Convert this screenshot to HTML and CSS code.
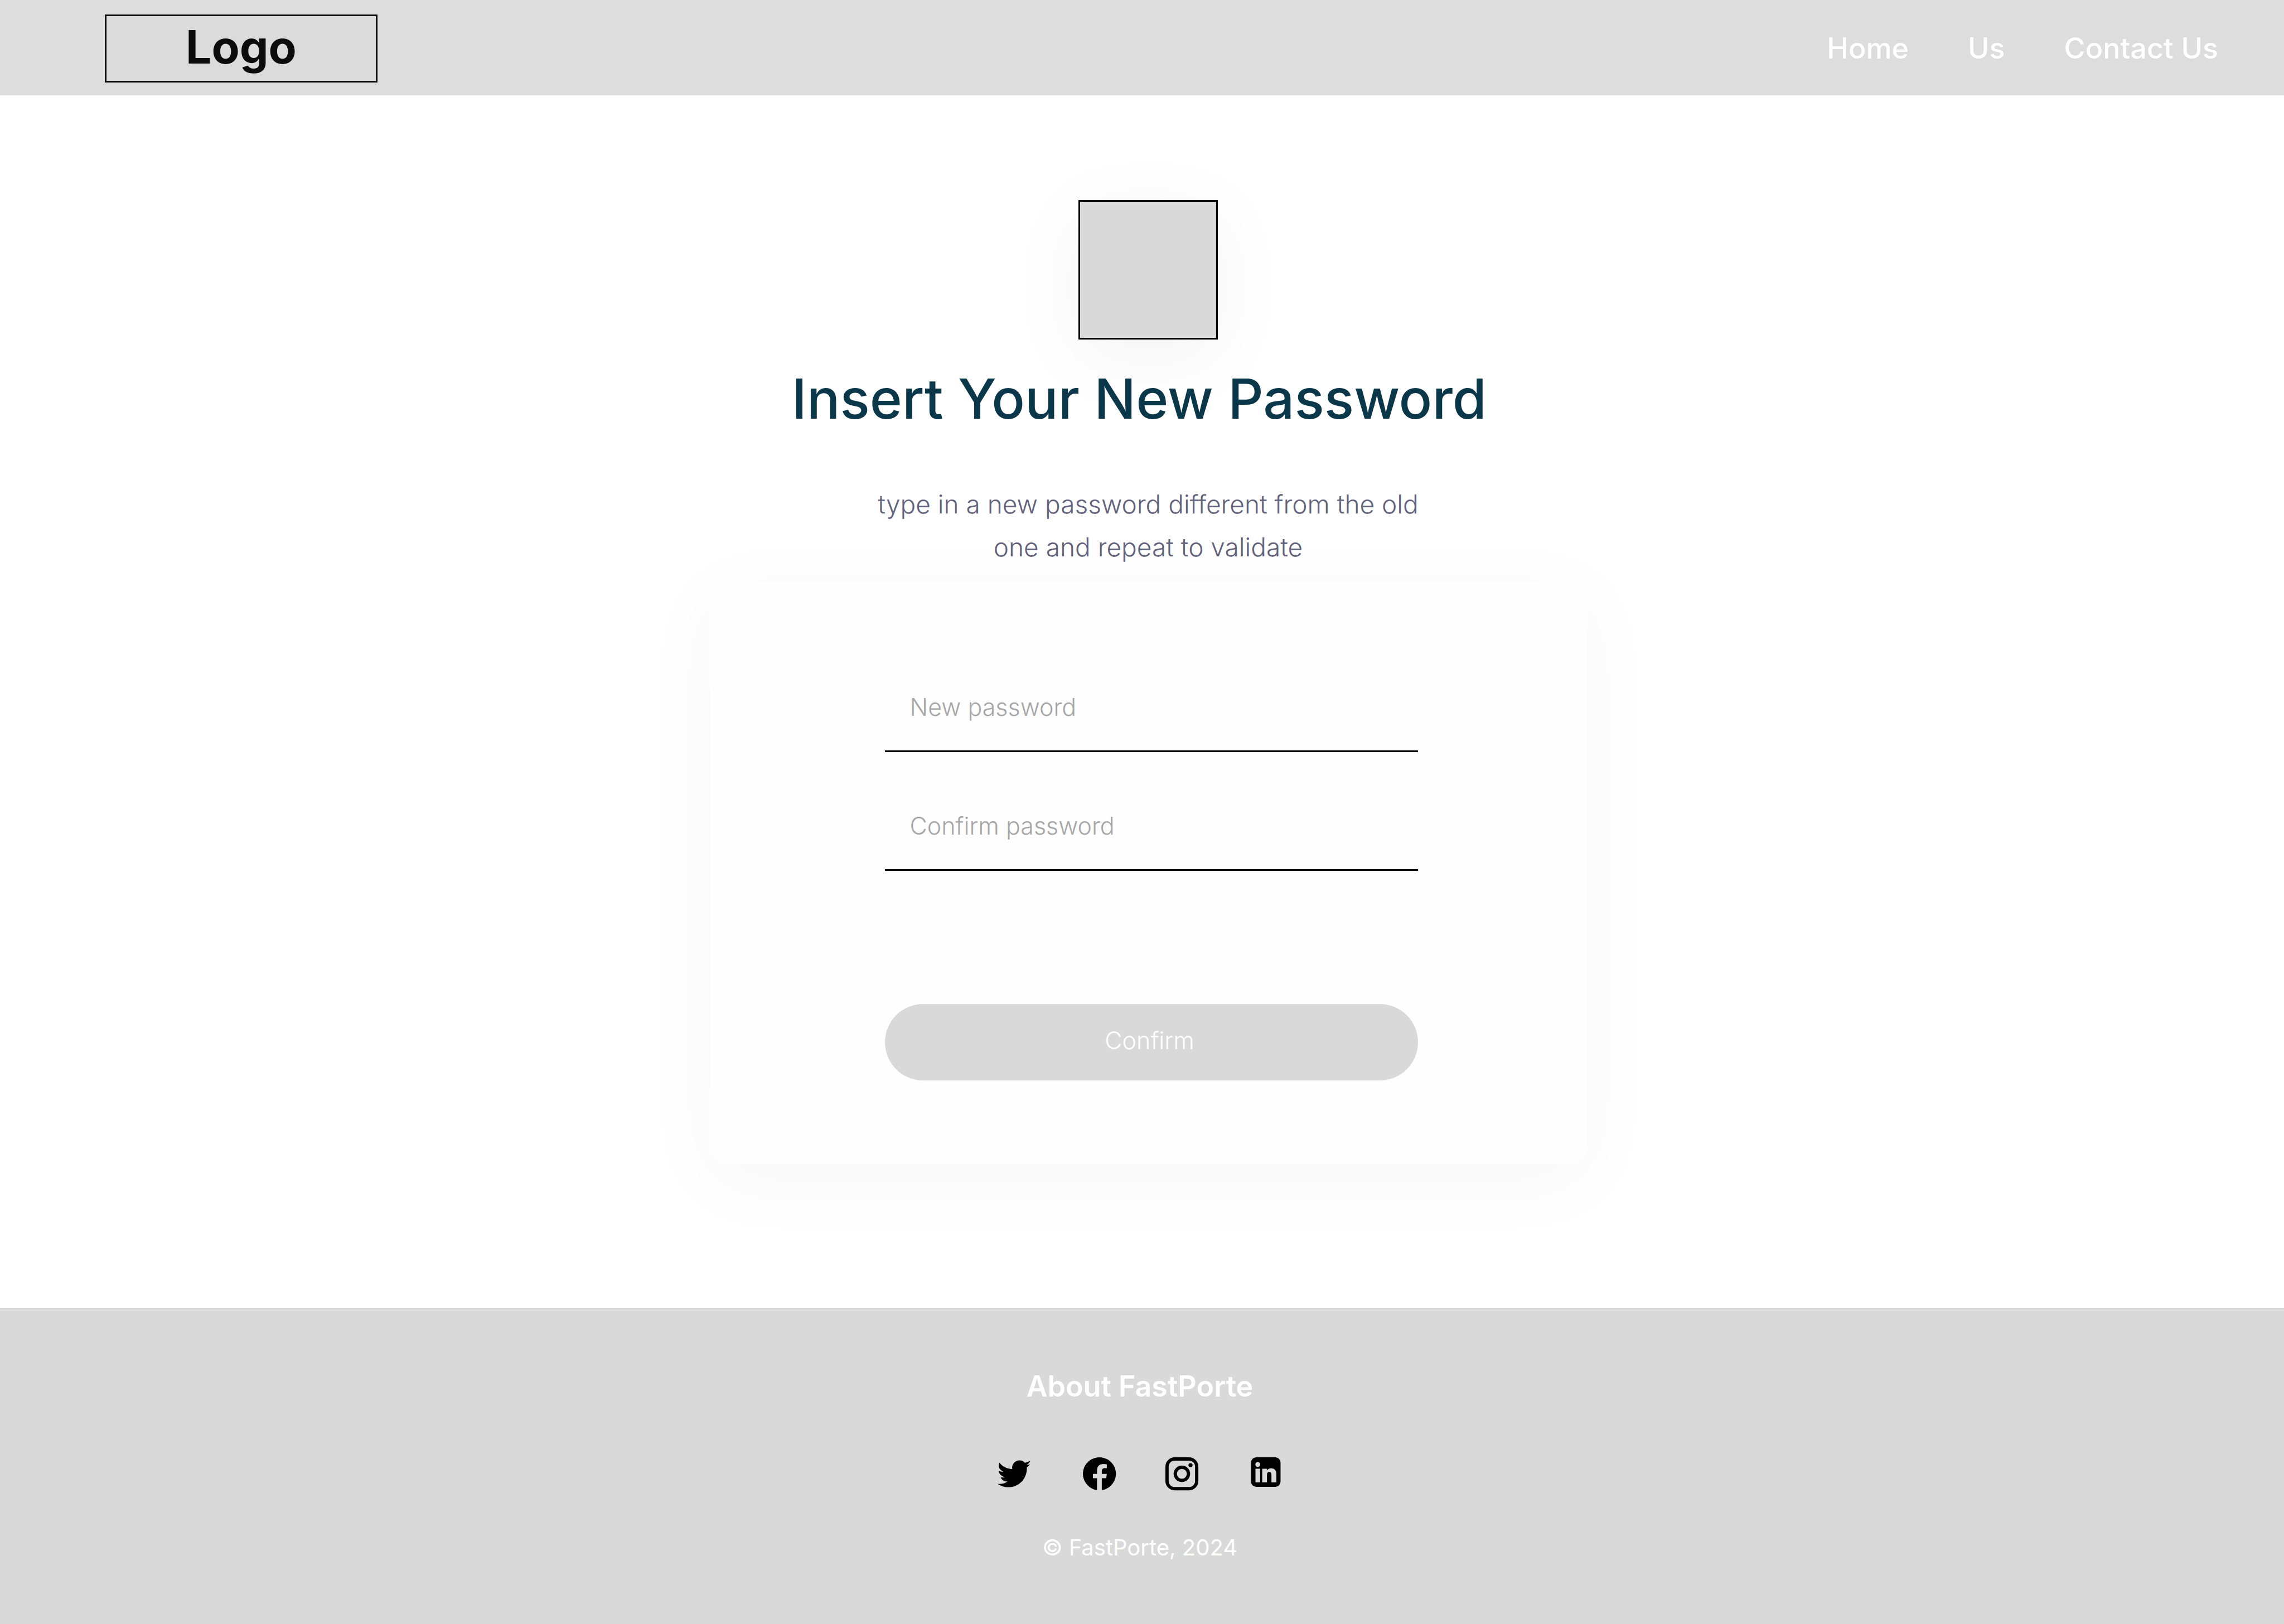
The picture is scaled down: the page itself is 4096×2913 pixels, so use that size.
FILE: index.html
```html
<!DOCTYPE html>
<html lang="en">
<head>
  <meta charset="utf-8">
  <meta name="viewport" content="width=device-width, initial-scale=1">
  <title>Insert Your New Password</title>
  <link rel="stylesheet" href="styles.css">
</head>
<body>
  <header class="topbar">
    <a class="logo" href="#">Logo</a>
    <nav class="nav">
      <a class="nav-link" href="#">Home</a>
      <a class="nav-link" href="#">Us</a>
      <a class="nav-link" href="#">Contact Us</a>
    </nav>
  </header>

  <main class="main">
    <div class="emblem"></div>
    <h1 class="title">Insert Your New Password</h1>
    <p class="lead">type in a new password different from the old one and repeat to validate</p>
    <form class="card">
      <div class="fields">
        <input class="field" type="password" placeholder="New password" aria-label="New password">
        <input class="field" type="password" placeholder="Confirm password" aria-label="Confirm password">
      </div>
      <button class="submit" type="button">Confirm</button>
    </form>
  </main>

  <footer class="footer">
    <h2 class="footer-title">About FastPorte</h2>
    <div class="social">
      <a class="social-link" href="#" aria-label="Twitter">
        <svg class="icon" viewBox="90 83 300 300"><path d="M359 134C346 142 333 147 318 150C307 138 294 132 278 132C243 132 217 162 222 197C180 195 146 176 124 147C114 173 121 202 156 217C143 218 131 216 121 212C122 235 142 255 170 258C160 262 147 262 135 259C142 279 160 291 186 292C168 306 140 313 110 309C135 325 160 335 190 335C285 335 337 258 333 184C344 177 352 168 357 160C348 165 340 167 330 168C344 160 354 148 359 134Z"/></svg>
      </a>
      <a class="social-link" href="#" aria-label="Facebook">
        <svg class="icon" viewBox="722 83 300 300"><path d="M863 357A125 125 0 1 1 899 357V267H933L937 234H899V212C899 200 906 191 918 191H937V161Q926 159 912 159C880 159 863 177 863 210V234H832V267H863Z"/></svg>
      </a>
      <a class="social-link" href="#" aria-label="Instagram">
        <svg class="icon" viewBox="156 83 300 300"><g fill="none" stroke="#000" stroke-width="25"><rect x="193.500" y="121" width="225" height="225" rx="58"/><circle cx="306" cy="233.500" r="50"/></g><circle cx="371.500" cy="168" r="15.600"/></svg>
      </a>
      <a class="social-link" href="#" aria-label="LinkedIn">
        <svg class="icon" viewBox="788 83 300 300"><path fill-rule="evenodd" d="M868 108H1012A40 40 0 0 1 1052 148V292A40 40 0 0 1 1012 332H868A40 40 0 0 1 828 292V148A40 40 0 0 1 868 108ZM861 162.500A18.500 18.500 0 1 0 898 162.500A18.500 18.500 0 1 0 861 162.500ZM862 195V299H897V195ZM913 195V299H949V241C949 227 955 219 966 219C977 219 983 227 983 241V299H1020V234C1020 207 1005 192 981 192C967 192 956 197 948 209V195Z"/></svg>
      </a>
    </div>
    <p class="copyright">© FastPorte, 2024</p>
  </footer>
</body>
</html>
```
FILE: styles.css
```css
* {
  box-sizing: border-box;
}

body {
  display: flex;
  flex-direction: column;
  min-height: 100vh;
  margin: 0;
  background: #fff;
  font-family: Inter, "Liberation Sans", sans-serif;
}

a {
  color: inherit;
  text-decoration: none;
}

.topbar {
  display: flex;
  align-items: center;
  justify-content: space-between;
  height: 171px;
  padding: 2px 118px 0 188px;
  background: #ddd;
}

.logo {
  display: flex;
  align-items: center;
  justify-content: center;
  width: 489px;
  height: 122px;
  padding-bottom: 4px;
  border: 3px solid #0c0c0c;
  background: #dbdbdb;
  color: #0c0c0c;
  font-size: 82px;
  font-weight: 700;
  line-height: 100px;
}

.nav {
  display: flex;
  gap: 106px;
}

.nav-link {
  color: #fff;
  font-size: 52px;
  font-weight: 500;
  line-height: 62px;
}

.main {
  display: flex;
  flex: 1;
  flex-direction: column;
  align-items: center;
  padding: 188px 0 0 22px;
}

.emblem {
  width: 250px;
  height: 250px;
  border: 3px solid #000;
  background: #d9d9d9;
  box-shadow: 0 28px 142px rgba(0, 0, 0, 0.05);
}

.title {
  margin: 46px 0 0;
  padding-right: 32px;
  color: #0a3749;
  font-size: 99px;
  font-weight: 500;
  line-height: 120px;
}

.lead {
  max-width: 1024px;
  margin: 91px 0 0;
  color: #62627c;
  font-size: 46px;
  font-weight: 300;
  line-height: 77px;
  text-align: center;
}

.card {
  display: flex;
  flex-direction: column;
  gap: 239px;
  width: 1573px;
  max-width: 100%;
  margin-top: 23px;
  padding: 186px 303px 150px 314px;
  border-radius: 28px;
  background: #fefefe;
  box-shadow: 0 28px 142px rgba(0, 0, 0, 0.04);
}

.fields {
  display: flex;
  flex-direction: column;
  gap: 93px;
}

.field {
  width: 100%;
  height: 120px;
  padding: 0 45px 40px;
  border: 0;
  border-bottom: 3px solid #000;
  background: transparent;
  color: #000;
  font-family: inherit;
  font-size: 43px;
  font-weight: 300;
  line-height: 77px;
}

.field::placeholder {
  color: #a6a6a6;
  opacity: 1;
}

.submit {
  height: 137px;
  padding: 0 6px 8px 0;
  border: 0;
  border-radius: 69px;
  background: #d9d9d9;
  color: #fff;
  font-family: inherit;
  font-size: 43px;
  font-weight: 300;
}

.footer {
  display: flex;
  flex-direction: column;
  align-items: center;
  padding: 110px 8px 113px 0;
  background: #d9d9d9;
  color: #fff;
}

.footer-title {
  margin: 0;
  font-size: 52px;
  font-weight: 600;
  line-height: 62px;
}

.social {
  display: flex;
  gap: 79px;
  margin-top: 90px;
}

.social-link {
  display: flex;
}

.icon {
  width: 71px;
  height: 71px;
}

.copyright {
  margin: 73px 0 0;
  font-size: 40px;
  font-weight: 400;
  line-height: 48px;
}
```
